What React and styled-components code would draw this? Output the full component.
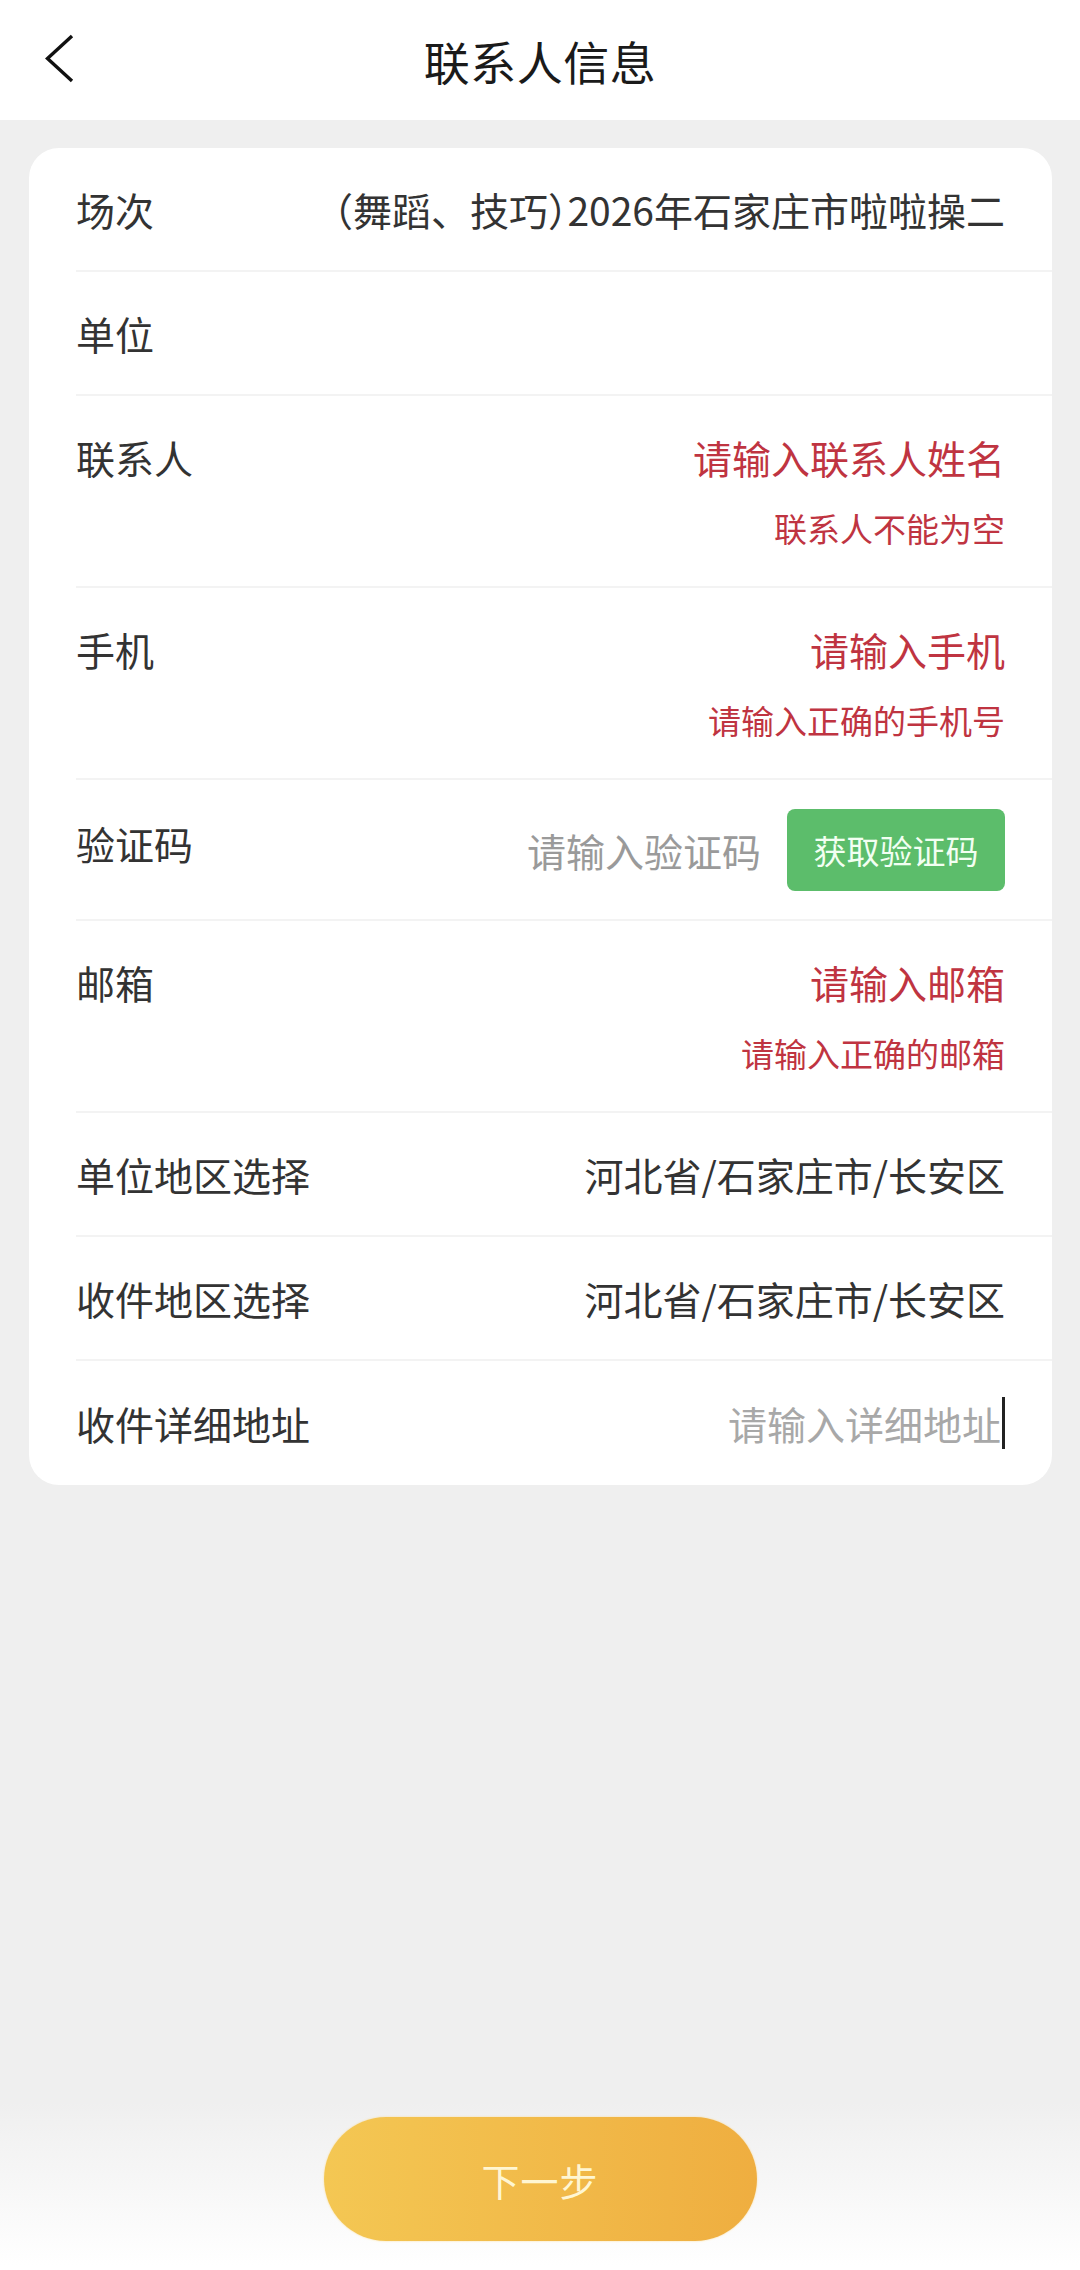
import React from 'react'
import styled, { createGlobalStyle } from 'styled-components'

const Global = createGlobalStyle`
  html, body {
    margin: 0;
    padding: 0;
    background: #efefef;
  }
  * { box-sizing: border-box; }
  body {
    font-family: "Noto Sans CJK SC", "Noto Sans", sans-serif;
  }
`

const Page = styled.div`
  min-height: 2270px;
  display: flex;
  flex-direction: column;
  background: #efefef;
`

const Header = styled.div`
  height: 120px;
  background: #fff;
  display: grid;
  grid-template-columns: 1fr auto 1fr;
  align-items: center;
`

const Back = styled.div`
  padding-left: 45px;
  display: flex;
  align-items: center;
  height: 120px;
  svg { display: block; margin-top: -3px; }
`

const Title = styled.div`
  font-size: 46px;
  line-height: 56px;
  color: #1a1a1a;
  letter-spacing: 0.5px;
`

const Card = styled.div`
  margin: 28px 28px 0 29px;
  background: #fff;
  border-radius: 30px;
  overflow: hidden;
`

const Row = styled.div`
  margin-left: 47px;
  padding: ${p => p.$pad || '33px 47px 33px 0'};
  display: flex;
  justify-content: space-between;
  align-items: flex-start;
  border-bottom: ${p => p.$last ? 'none' : '2px solid #f3f3f3'};
  gap: 24px;
`

const Label = styled.div`
  flex-shrink: 0;
  font-size: 39px;
  line-height: 56px;
  color: #333;
  align-self: flex-start;
  margin-top: ${p => p.$offset || 0}px;
`

const Value = styled.div`
  flex: 1;
  min-width: 0;
  text-align: right;
  font-size: 39px;
  line-height: 56px;
  color: ${p => p.$color || '#333'};
  white-space: nowrap;
  overflow: hidden;
  font-feature-settings: "halt";
`

const FullMark = styled.span`
  font-feature-settings: normal;
`

const Right = styled.div`
  display: flex;
  flex-direction: column;
  align-items: flex-end;
`

const ErrorText = styled.div`
  margin-top: 20px;
  font-size: 33px;
  line-height: 46px;
  color: #bf3441;
`

const CodeBox = styled.div`
  display: flex;
  align-items: center;
  gap: 26px;
`

const Placeholder = styled.span`
  font-size: 39px;
  line-height: 56px;
  color: ${p => p.$light ? '#a8a8a8' : '#9a9a9a'};
`

const CodeButton = styled.button`
  width: 218px;
  height: 82px;
  border: none;
  border-radius: 8px;
  background: #5cbd6b;
  color: #f2fff2;
  font-family: inherit;
  font-size: 33px;
  padding: 0;
`

const Caret = styled.span`
  display: inline-block;
  width: 3px;
  height: 52px;
  background: #222;
  vertical-align: middle;
  margin-left: 1px;
`

const InputLine = styled.div`
  display: flex;
  align-items: center;
`

const Spacer = styled.div`
  flex: 1;
`

const Footer = styled.div`
  height: 210px;
  padding-top: 57px;
  display: flex;
  justify-content: center;
  align-items: flex-start;
  background: linear-gradient(to bottom, #efefef 0%, #efefef 20%, #f7f7f7 60%, #ffffff 98%);
`

const NextButton = styled.button`
  width: 433px;
  height: 124px;
  border: none;
  border-radius: 62px;
  background: linear-gradient(to right, #f4c753, #efae40);
  box-shadow: 0 0 2px rgba(255, 214, 120, 0.8);
  color: #fff6d2;
  font-family: inherit;
  font-size: 38px;
  letter-spacing: 1px;
  padding: 0;
`

function BackIcon() {
  return (
    <svg width="30" height="50" viewBox="0 0 30 50">
      <path d="M27 2 L2.5 24.5 L27 47" fill="none" stroke="#111" strokeWidth="3.4" strokeLinejoin="miter" />
    </svg>
  )
}

function ErrorRow({ label, placeholder, error }) {
  return (
    <Row $pad="33px 47px 35px 0">
      <Label>{label}</Label>
      <Right>
        <Value $color="#bf3441">{placeholder}</Value>
        <ErrorText>{error}</ErrorText>
      </Right>
    </Row>
  )
}

export default function App() {
  return (
    <Page>
      <Global />
      <Header>
        <Back><BackIcon /></Back>
        <Title>联系人信息</Title>
        <div />
      </Header>

      <Card>
        <Row>
          <Label>场次</Label>
          <Value>（舞蹈<FullMark>、</FullMark>技巧）2026年石家庄市啦啦操二</Value>
        </Row>
        <Row>
          <Label>单位</Label>
          <Value></Value>
        </Row>
        <ErrorRow label="联系人" placeholder="请输入联系人姓名" error="联系人不能为空" />
        <ErrorRow label="手机" placeholder="请输入手机" error="请输入正确的手机号" />
        <Row $pad="29px 47px 28px 0">
          <Label $offset={6}>验证码</Label>
          <CodeBox>
            <Placeholder>请输入验证码</Placeholder>
            <CodeButton>获取验证码</CodeButton>
          </CodeBox>
        </Row>
        <ErrorRow label="邮箱" placeholder="请输入邮箱" error="请输入正确的邮箱" />
        <Row>
          <Label>单位地区选择</Label>
          <Value>河北省/石家庄市/长安区</Value>
        </Row>
        <Row>
          <Label>收件地区选择</Label>
          <Value>河北省/石家庄市/长安区</Value>
        </Row>
        <Row $last $pad="34px 47px 34px 0">
          <Label>收件详细地址</Label>
          <InputLine>
            <Placeholder $light>请输入详细地址</Placeholder>
            <Caret />
          </InputLine>
        </Row>
      </Card>

      <Spacer />

      <Footer>
        <NextButton>下一步</NextButton>
      </Footer>
    </Page>
  )
}
